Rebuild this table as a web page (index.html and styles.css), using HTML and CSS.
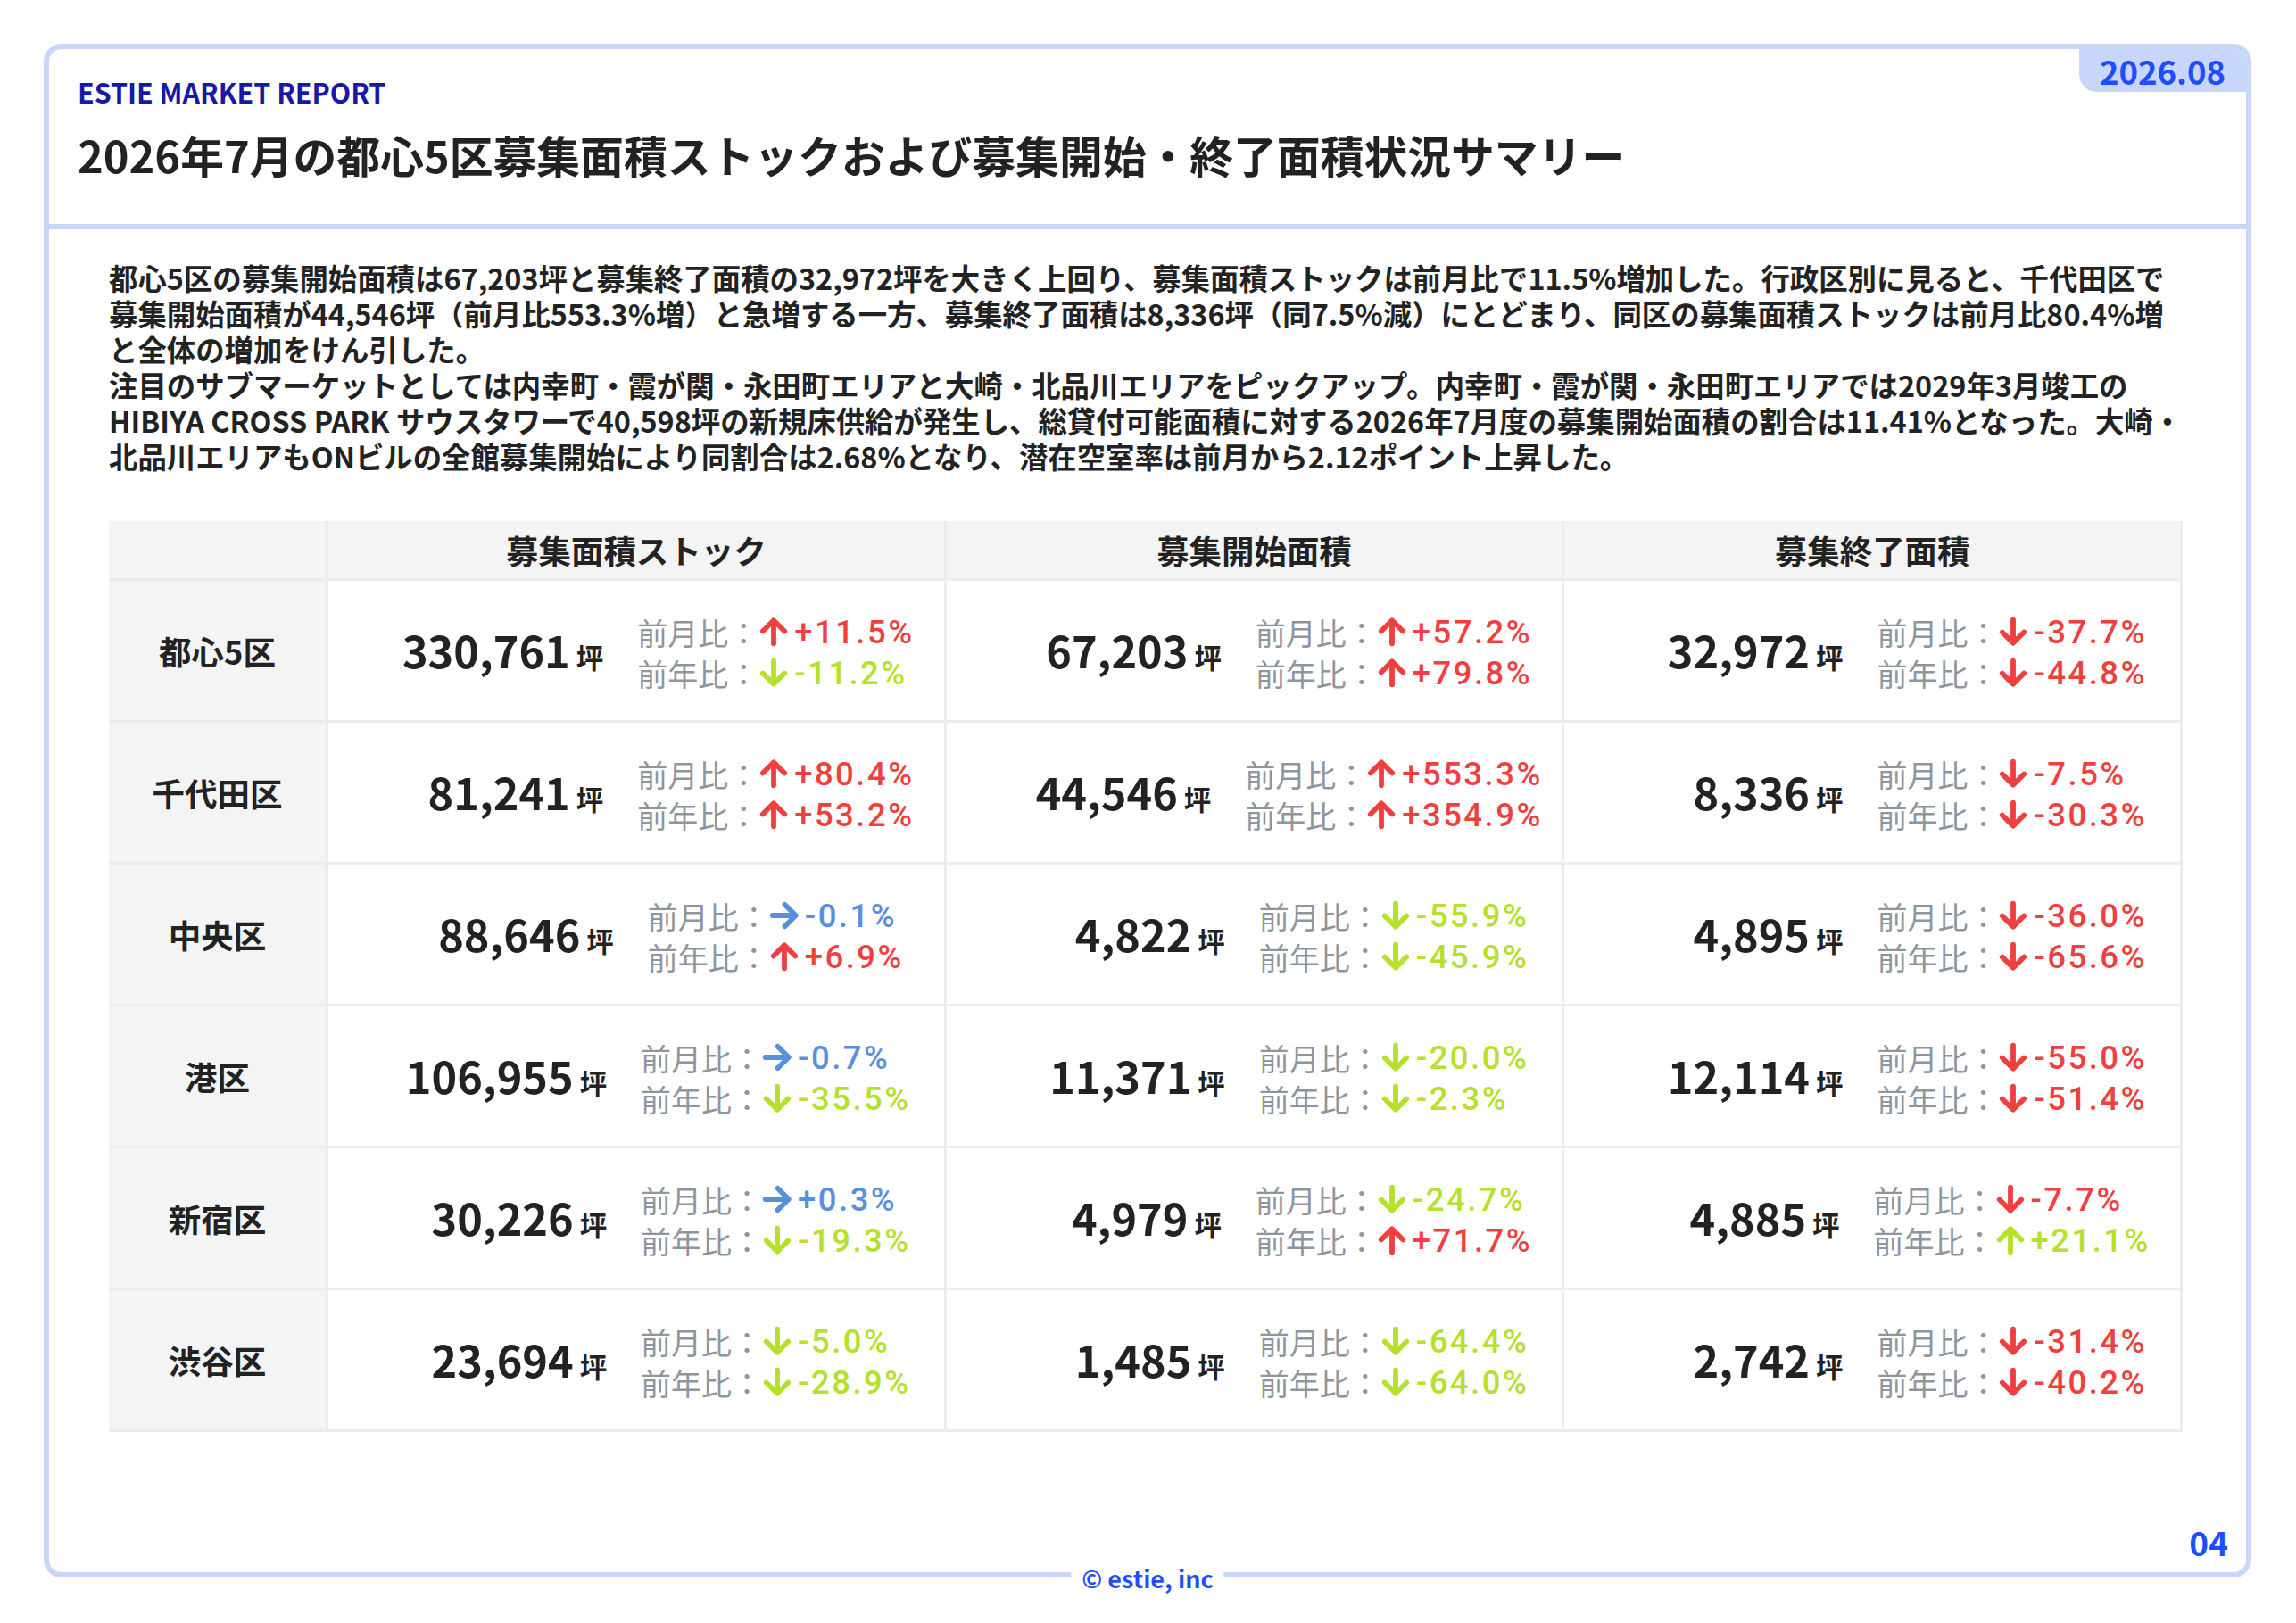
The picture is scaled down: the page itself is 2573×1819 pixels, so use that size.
FILE: index.html
```html
<!DOCTYPE html>
<html lang="ja">
<head>
<meta charset="utf-8">
<title>ESTIE MARKET REPORT 2026.08</title>
<link rel="stylesheet" href="styles.css">
</head>
<body>
<div class="frame">
  <div class="badge">2026.08</div>
  <header class="head">
    <div class="eyebrow">ESTIE MARKET REPORT</div>
    <h1 class="title">2026年7月の都心5区募集面積ストックおよび募集開始・終了面積状況サマリー</h1>
  </header>
  <main class="content">
    <div class="summary">
      <p>都心5区の募集開始面積は67,203坪と募集終了面積の32,972坪を大きく上回り、募集面積ストックは前月比で11.5%増加した。行政区別に見ると、千代田区で募集開始面積が44,546坪（前月比553.3%増）と急増する一方、募集終了面積は8,336坪（同7.5%減）にとどまり、同区の募集面積ストックは前月比80.4%増と全体の増加をけん引した。</p>
      <p>注目のサブマーケットとしては内幸町・霞が関・永田町エリアと大崎・北品川エリアをピックアップ。内幸町・霞が関・永田町エリアでは2029年3月竣工のHIBIYA CROSS PARK サウスタワーで40,598坪の新規床供給が発生し、総貸付可能面積に対する2026年7月度の募集開始面積の割合は11.41%となった。大崎・北品川エリアもONビルの全館募集開始により同割合は2.68%となり、潜在空室率は前月から2.12ポイント上昇した。</p>
    </div>
    <div class="table" id="table">
      <div class="th corner"></div>
      <div class="th">募集面積ストック</div>
      <div class="th">募集開始面積</div>
      <div class="th">募集終了面積</div>
    </div>
  </main>
  <div class="pageno">04</div>
  <div class="copy">© estie, inc</div>
</div>
<script src="app.js"></script>
</body>
</html>
```

FILE: app.js
```js
(function () {
  var rows = [
    ["都心5区", [["330,761", "u r", "+11.5%", "d g", "-11.2%"], ["67,203", "u r", "+57.2%", "u r", "+79.8%"], ["32,972", "d r", "-37.7%", "d r", "-44.8%"]]],
    ["千代田区", [["81,241", "u r", "+80.4%", "u r", "+53.2%"], ["44,546", "u r", "+553.3%", "u r", "+354.9%"], ["8,336", "d r", "-7.5%", "d r", "-30.3%"]]],
    ["中央区", [["88,646", "f b", "-0.1%", "u r", "+6.9%"], ["4,822", "d g", "-55.9%", "d g", "-45.9%"], ["4,895", "d r", "-36.0%", "d r", "-65.6%"]]],
    ["港区", [["106,955", "f b", "-0.7%", "d g", "-35.5%"], ["11,371", "d g", "-20.0%", "d g", "-2.3%"], ["12,114", "d r", "-55.0%", "d r", "-51.4%"]]],
    ["新宿区", [["30,226", "f b", "+0.3%", "d g", "-19.3%"], ["4,979", "d g", "-24.7%", "u r", "+71.7%"], ["4,885", "d r", "-7.7%", "u g", "+21.1%"]]],
    ["渋谷区", [["23,694", "d g", "-5.0%", "d g", "-28.9%"], ["1,485", "d g", "-64.4%", "d g", "-64.0%"], ["2,742", "d r", "-31.4%", "d r", "-40.2%"]]]
  ];
  var dirs = { u: "up", d: "down", f: "flat" };
  var cols = { r: "red", g: "green", b: "blue" };
  function line(label, code, pct) {
    var p = code.split(" ");
    return '<div class="line"><span class="lbl">' + label + '：</span>' +
      '<svg class="arr ' + dirs[p[0]] + ' ' + cols[p[1]] + '" viewBox="0 0 32 32"><path d="M16 28.5V4.5M4.5 15.5L16 4L27.5 15.5"/></svg>' +
      '<span class="pct ' + cols[p[1]] + '">' + pct + '</span></div>';
  }
  var html = "";
  rows.forEach(function (r) {
    html += '<div class="rowhead">' + r[0] + '</div>';
    r[1].forEach(function (c) {
      html += '<div class="td"><div class="num"><span class="val">' + c[0] + '</span><span class="unit">坪</span></div>' +
        '<div class="chg">' + line("前月比", c[1], c[2]) + line("前年比", c[3], c[4]) + '</div></div>';
    });
  });
  document.getElementById("table").insertAdjacentHTML("beforeend", html);
})();
```

FILE: styles.css
```css
* { box-sizing: border-box; }
html, body { margin: 0; padding: 0; background: #ffffff; }
body {
  font-family: "Noto Sans CJK JP", "Noto Sans", sans-serif;
  color: #222222;
  min-height: 1819px;
  padding: 49px 0 51px 49px;
}
.frame {
  position: relative;
  width: 2474px;
  height: 1719px;
  border: 6px solid #c9d6fc;
  border-radius: 20px;
  display: flex;
  flex-direction: column;
}
.badge {
  position: absolute;
  top: 0;
  right: 0;
  width: 187px;
  height: 48px;
  background: #c9d6fc;
  border-bottom-left-radius: 20px;
  border-top-right-radius: 14px;
  color: #1f4dff;
  font-weight: 700;
  font-size: 36.5px;
  line-height: 50px;
  text-align: center;
}
.head {
  padding: 28px 32px 48px;
  border-bottom: 6px solid #c9d6fc;
}
.eyebrow {
  color: #1717a8;
  font-weight: 700;
  font-size: 30.4px;
  line-height: 40px;
  margin-bottom: 20px;
}
.title {
  margin: 0;
  font-size: 48.8px;
  line-height: 60px;
  font-weight: 700;
  color: #222222;
}
.content {
  padding: 34px 71px 0 67px;
}
.summary p {
  margin: 0;
  font-size: 32.4px;
  line-height: 40px;
  font-weight: 700;
  color: #222222;
}
.table {
  margin-top: 53px;
  display: grid;
  grid-template-columns: 243px repeat(3, 1fr);
  grid-template-rows: 64px repeat(6, 156px);
  gap: 3px;
  padding: 0 3px 3px 0;
  background: #ececec;
}
.th {
  background: #f4f4f4;
  display: flex;
  align-items: center;
  justify-content: center;
  font-size: 36.45px;
  font-weight: 700;
  color: #222222;
}
.rowhead {
  background: #f4f4f4;
  display: flex;
  align-items: center;
  justify-content: center;
  font-size: 36.45px;
  font-weight: 700;
  color: #222222;
}
.td {
  background: #ffffff;
  display: flex;
  align-items: center;
  justify-content: center;
  gap: 38px;
}
.num {
  width: 275px;
  display: flex;
  justify-content: flex-end;
  align-items: baseline;
  font-weight: 700;
  color: #222222;
  line-height: 60px;
  padding-top: 6px;
}
.val { font-size: 48.6px; }
.unit { font-size: 30.4px; margin-left: 7px; }
.chg { display: flex; flex-direction: column; padding-top: 4px; }
.line {
  display: flex;
  align-items: center;
  height: 46px;
  white-space: nowrap;
}
.lbl {
  font-size: 34px;
  font-weight: 400;
  color: #8f959c;
}
.arr {
  width: 34px;
  height: 34px;
  margin-right: 6px;
  fill: none;
  stroke: currentColor;
  stroke-width: 5.5;
  stroke-linecap: round;
  stroke-linejoin: round;
}
.arr.down { transform: rotate(180deg); }
.arr.flat { transform: rotate(90deg); }
.pct {
  font-family: Roboto, "Noto Sans CJK JP", sans-serif;
  font-weight: 500;
  font-size: 36.45px;
  letter-spacing: 2.5px;
}
.red { color: #ef4040; }
.green { color: #b5e02b; }
.blue { color: #5a8fe0; }
.pageno {
  margin-top: auto;
  align-self: flex-end;
  padding: 0 20px 10px 0;
  color: #1f4dff;
  font-weight: 700;
  font-size: 37px;
  line-height: 48px;
}
.copy {
  position: absolute;
  left: 50%;
  bottom: -27px;
  transform: translateX(-50%);
  background: #ffffff;
  padding: 0 12px;
  color: #1f4dff;
  font-weight: 700;
  font-size: 27px;
  line-height: 40px;
  white-space: nowrap;
}
```
